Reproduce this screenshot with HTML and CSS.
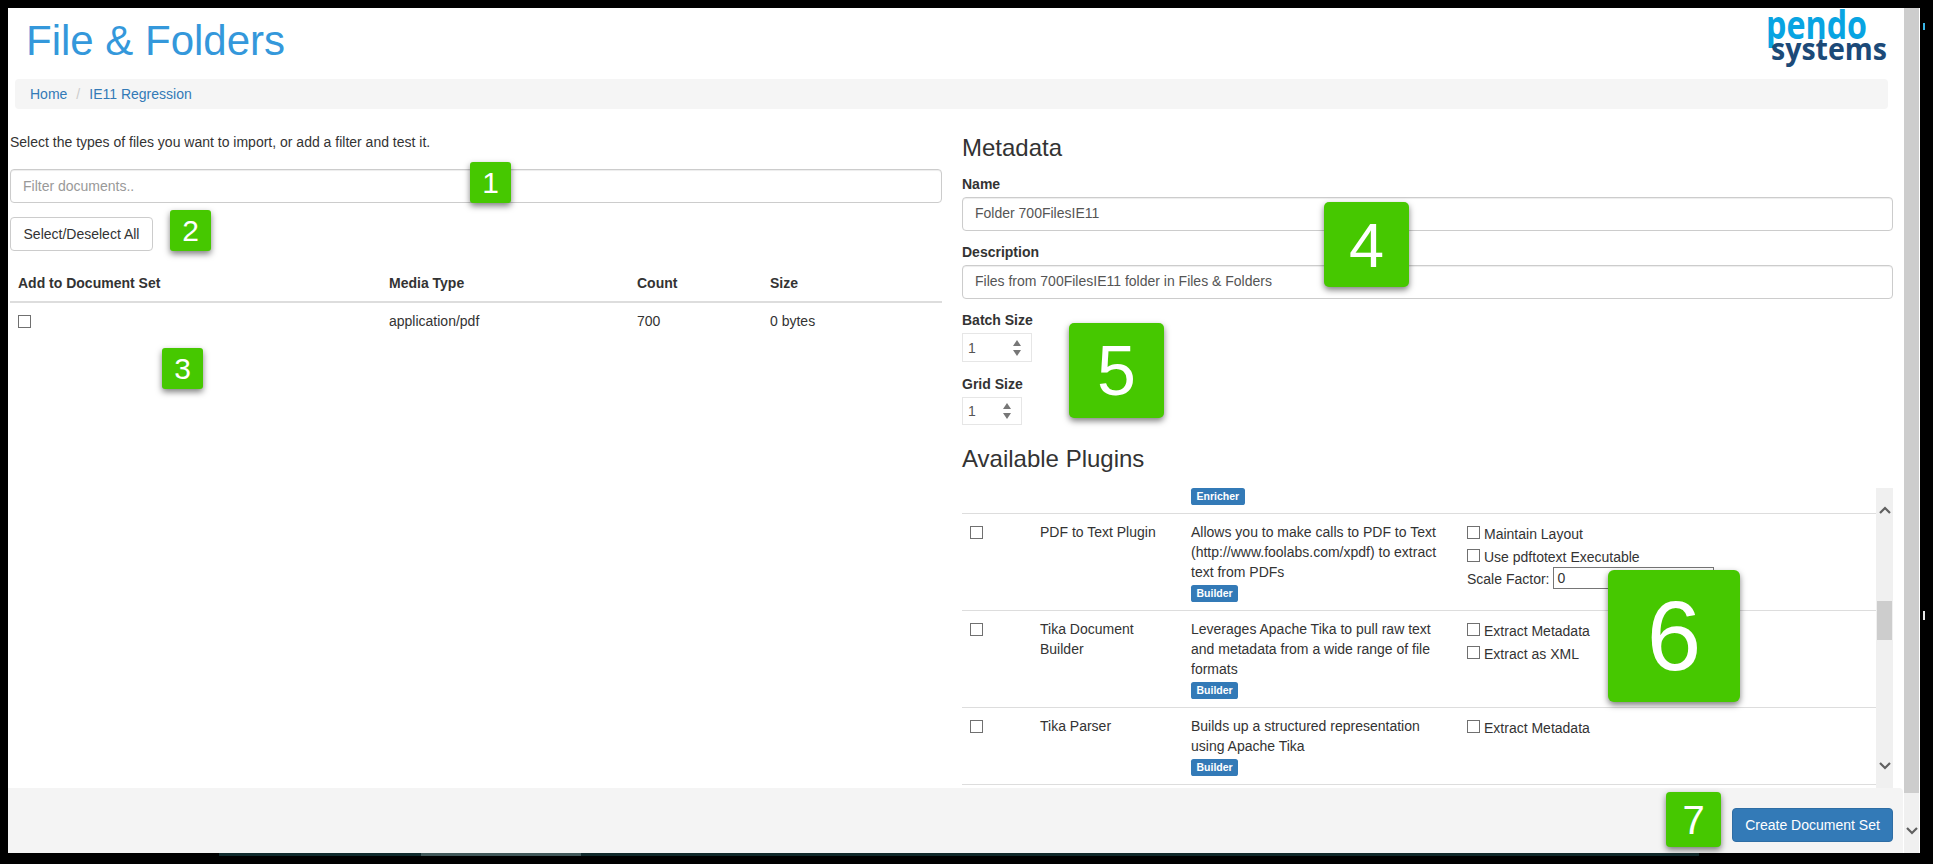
FILE: index.html
```html
<!DOCTYPE html>
<html lang="en">
<head>
<meta charset="utf-8">
<title>File &amp; Folders</title>
<link rel="stylesheet" href="styles.css">
</head>
<body>
<div class="window">
  <div class="page">
    <header class="header">
      <h1 class="title">File &amp; Folders</h1>
      <svg class="logo" width="124" height="62" viewBox="0 0 124 62" aria-label="pendo systems">
        <text class="logo-pendo" x="1" y="30" textLength="101" lengthAdjust="spacingAndGlyphs">pendo</text>
        <text class="logo-systems" x="6" y="51" textLength="116" lengthAdjust="spacingAndGlyphs">systems</text>
      </svg>
    </header>
    <nav class="crumbs"><a class="crumb" href="#">Home</a><span class="crumb-sep">/</span><a class="crumb" href="#">IE11 Regression</a></nav>
    <main class="main">
      <section class="col-left">
        <p class="intro">Select the types of files you want to import, or add a filter and test it.</p>
        <input class="control filter" type="text" placeholder="Filter documents..">
        <button class="btn select-all" type="button">Select/Deselect All</button>
        <table class="types">
          <thead>
            <tr><th class="t1">Add to Document Set</th><th class="t2">Media Type</th><th class="t3">Count</th><th class="t4">Size</th></tr>
          </thead>
          <tbody>
            <tr><td><input class="check" type="checkbox"></td><td>application/pdf</td><td>700</td><td>0 bytes</td></tr>
          </tbody>
        </table>
      </section>
      <section class="col-right">
        <h3 class="heading">Metadata</h3>
        <label class="field-label name-label">Name</label>
        <input class="control meta-input" type="text" value="Folder 700FilesIE11">
        <label class="field-label">Description</label>
        <input class="control meta-input" type="text" value="Files from 700FilesIE11 folder in Files &amp; Folders">
        <label class="field-label">Batch Size</label>
        <div class="num num-batch">
          <input class="num-input" type="text" value="1">
          <svg class="spin" width="8" height="16" viewBox="0 0 8 16"><path d="M4 0 8 6H0zM0 10H8L4 16z"/></svg>
        </div>
        <label class="field-label grid-label">Grid Size</label>
        <div class="num num-grid">
          <input class="num-input" type="text" value="1">
          <svg class="spin" width="8" height="16" viewBox="0 0 8 16"><path d="M4 0 8 6H0zM0 10H8L4 16z"/></svg>
        </div>
        <h3 class="heading plugins-heading">Available Plugins</h3>
        <div class="plugins">
          <div class="plugin-list">
            <table class="plugin-table">
              <tbody>
                <tr class="cut-row">
                  <td class="p1"></td><td class="p2"></td>
                  <td class="p3"><div class="line"><span class="tag">Enricher</span></div></td>
                  <td class="p4"></td>
                </tr>
                <tr>
                  <td><input class="check" type="checkbox"></td>
                  <td>PDF to Text Plugin</td>
                  <td>Allows you to make calls to PDF to Text (http://www.foolabs.com/xpdf) to extract text from PDFs<div class="line"><span class="tag">Builder</span></div></td>
                  <td>
                    <label class="opt"><input class="check opt-check" type="checkbox">Maintain Layout</label>
                    <label class="opt"><input class="check opt-check" type="checkbox">Use pdftotext Executable</label>
                    <label class="opt-text">Scale Factor:<input class="scale" type="text" value="0"></label>
                  </td>
                </tr>
                <tr>
                  <td><input class="check" type="checkbox"></td>
                  <td>Tika Document Builder</td>
                  <td>Leverages Apache Tika to pull raw text and metadata from a wide range of file formats<div class="line"><span class="tag">Builder</span></div></td>
                  <td>
                    <label class="opt"><input class="check opt-check" type="checkbox">Extract Metadata</label>
                    <label class="opt"><input class="check opt-check" type="checkbox">Extract as XML</label>
                  </td>
                </tr>
                <tr>
                  <td><input class="check" type="checkbox"></td>
                  <td>Tika Parser</td>
                  <td>Builds up a structured representation using Apache Tika<div class="line"><span class="tag">Builder</span></div></td>
                  <td>
                    <label class="opt"><input class="check opt-check" type="checkbox">Extract Metadata</label>
                  </td>
                </tr>
              </tbody>
            </table>
          </div>
          <div class="inner-track">
            <svg class="chev chev-up" width="12" height="8" viewBox="0 0 12 8"><path d="M1 7 6 2l5 5"/></svg>
            <div class="inner-thumb"></div>
            <svg class="chev chev-down" width="12" height="8" viewBox="0 0 12 8"><path d="M1 1l5 5 5-5"/></svg>
          </div>
        </div>
      </section>
    </main>
    <footer class="footer">
      <button class="btn btn-primary" type="button">Create Document Set</button>
    </footer>
  </div>
  <div class="outer-bar">
    <div class="outer-thumb"></div>
    <svg class="chev outer-chev" width="12" height="8" viewBox="0 0 12 8"><path d="M1 1l5 5 5-5"/></svg>
  </div>
  <div class="callout c1">1</div>
  <div class="callout c2">2</div>
  <div class="callout c3">3</div>
  <div class="callout c4">4</div>
  <div class="callout c5">5</div>
  <div class="callout c6">6</div>
  <div class="callout c7">7</div>
</div>
<div class="strip"></div>
<div class="blip blip-a"></div>
<div class="blip blip-b"></div>
</body>
</html>
```

FILE: styles.css
```css
* { box-sizing: border-box; }

html, body { height: 100%; }

body {
  margin: 0;
  padding: 8px 0 0 8px;
  background: #000;
  overflow: hidden;
  font-family: "Liberation Sans", Arial, sans-serif;
  font-size: 14px;
  line-height: 20px;
  color: #333;
}

.window {
  position: relative;
  display: flex;
  width: 1912px;
  height: 845px;
  background: #fff;
}

.page {
  display: flex;
  flex-direction: column;
  width: 1896px;
  min-width: 0;
}

/* header */
.header {
  display: flex;
  justify-content: space-between;
  align-items: flex-start;
  flex: none;
  height: 71px;
  padding: 0 15px 0 18px;
}

.title {
  margin: 8px 0 0;
  font-size: 42px;
  line-height: 50px;
  font-weight: 400;
  color: #3498db;
}

.logo { display: block; margin-top: 1px; }

.logo-pendo {
  font-family: "Open Sans", sans-serif;
  font-weight: 700;
  font-size: 40px;
  fill: #08a4e2;
}

.logo-systems {
  font-family: "Open Sans", sans-serif;
  font-weight: 700;
  font-size: 31px;
  fill: #1c4a78;
}

/* breadcrumb */
.crumbs {
  flex: none;
  height: 30px;
  margin: 0 16px 0 7px;
  padding: 5px 15px;
  border-radius: 4px;
  background: #f5f5f5;
}

.crumb { color: #337ab7; text-decoration: none; }

.crumb-sep { padding: 0 9px 0 9px; color: #ccc; }

/* columns */
.main {
  display: flex;
  flex: 1;
  min-height: 0;
  gap: 20px;
  padding: 0 11px 0 2px;
  overflow: hidden;
}

.col-left {
  display: flex;
  flex-direction: column;
  align-items: flex-start;
  width: 932px;
  padding-top: 23px;
}

.col-right {
  display: flex;
  flex-direction: column;
  align-items: flex-start;
  width: 931px;
  padding-top: 26px;
}

.intro { margin: 0 0 17px; }

.control {
  display: block;
  flex: none;
  width: 100%;
  height: 34px;
  padding: 6px 12px;
  border: 1px solid #ccc;
  border-radius: 4px;
  box-shadow: inset 0 1px 1px rgba(0, 0, 0, .075);
  background: #fff;
  font: inherit;
  color: #555;
}

.control::placeholder { color: #999; opacity: 1; }

.meta-input { padding-top: 5px; padding-bottom: 7px; }

.btn {
  height: 34px;
  padding: 6px 12px;
  border: 1px solid #ccc;
  border-radius: 4px;
  background: #fff;
  font: inherit;
  color: #333;
}

.select-all { flex: none; width: 143px; margin-top: 14px; padding: 6px 0; }

.btn-primary {
  width: 161px;
  padding: 6px 0;
  border-color: #2e6da4;
  background: #337ab7;
  color: #fff;
}

/* file type table */
.types {
  width: 100%;
  margin-top: 14px;
  border-collapse: collapse;
  table-layout: fixed;
}

.types th {
  padding: 8px;
  border-bottom: 2px solid #ddd;
  text-align: left;
  font-weight: 700;
}

.types td { padding: 8px; vertical-align: top; }

.t1 { width: 371px; }
.t2 { width: 248px; }
.t3 { width: 133px; }

.check {
  appearance: none;
  display: block;
  width: 13px;
  height: 13px;
  margin: 4px 0 0;
  border: 1px solid #707070;
  background: #fff;
}

/* metadata */
.heading {
  margin: 0;
  font-size: 24px;
  line-height: 26px;
  font-weight: 400;
  color: #333;
}

.field-label {
  display: block;
  flex: none;
  margin: 11px 0 3px;
  font-weight: 700;
}

.name-label { margin-top: 13px; }
.grid-label { margin-top: 12px; }

.num {
  display: flex;
  flex: none;
  align-items: center;
  justify-content: space-between;
  height: 29px;
  padding: 0 10px 0 5px;
  border: 1px solid #e6e6e6;
  background: #fff;
}

.num-batch { width: 70px; }
.num-grid { width: 60px; height: 28px; }

.num-input {
  width: 30px;
  padding: 0;
  border: 0;
  outline: 0;
  font: inherit;
  color: #555;
  background: transparent;
}

.spin { display: block; fill: #777; }

.plugins-heading { margin-top: 21px; }

/* plugins */
.plugins {
  display: flex;
  flex: 1;
  min-height: 0;
  align-self: stretch;
  margin: 16px 0 0;
  overflow: hidden;
}

.plugin-list { width: 914px; overflow: hidden; }

.plugin-table {
  width: 914px;
  margin-top: -3px;
  border-collapse: collapse;
  table-layout: fixed;
}

.plugin-table td {
  padding: 8px;
  border-bottom: 1px solid #ddd;
  vertical-align: top;
}

.plugin-table .cut-row td { padding-top: 0; }

.p1 { width: 70px; }
.p2 { width: 151px; }
.p3 { width: 276px; }

.line { height: 20px; }

.tag {
  display: inline;
  padding: 2.1px 5.5px 3.15px;
  border-radius: 2.6px;
  background: #337ab7;
  font-size: 10.5px;
  font-weight: 700;
  line-height: 1;
  color: #fff;
}

.opt {
  display: flex;
  height: 23px;
  align-items: center;
  gap: 4px;
}

.opt-check { align-self: flex-start; margin-top: 4px; flex: none; }

.opt-text {
  display: flex;
  height: 22px;
  align-items: center;
  gap: 4px;
}

.scale {
  width: 161px;
  height: 22px;
  margin-top: -2px;
  padding: 0 3px;
  border: 1px solid #767676;
  background: #fff;
  font: inherit;
  color: #333;
}

/* scrollbars */
.inner-track {
  display: flex;
  flex-direction: column;
  align-items: center;
  width: 17px;
  background: #f0f0f0;
}

.chev { display: block; flex: none; fill: none; stroke: #606060; stroke-width: 2.2; }

.chev-up { margin-top: 18px; }

.inner-thumb {
  flex: none;
  width: 15px;
  height: 39px;
  margin-top: 87px;
  background: #cdcdcd;
}

.chev-down { margin-top: 122px; }

.outer-bar {
  display: flex;
  flex-direction: column;
  align-items: center;
  width: 16px;
  border-right: 1px solid #fff;
  background: #f0f0f0;
}

.outer-thumb { flex: none; width: 100%; height: 785px; background: #cdcdcd; }

.outer-chev { margin-top: 34px; }

/* footer */
.footer {
  display: flex;
  flex: none;
  justify-content: flex-end;
  align-items: flex-start;
  height: 65px;
  margin-right: 1px;
  padding: 20px 10px 0 0;
  border-top-right-radius: 4px;
  background: #f4f4f4;
}

/* numbered callouts laid over the screenshot */
.callout {
  position: absolute;
  display: flex;
  align-items: center;
  justify-content: center;
  border-radius: 3px;
  background: #46c800;
  box-shadow: 0 3px 6px rgba(0, 0, 0, .5);
  color: #fff;
}

.c1 { left: 462px; top: 154px; width: 41px; height: 41px; font-size: 30px; }
.c2 { left: 162px; top: 202px; width: 41px; height: 41px; font-size: 30px; }
.c3 { left: 154px; top: 340px; width: 41px; height: 41px; font-size: 30px; }
.c4 { left: 1316px; top: 194px; width: 85px; height: 85px; font-size: 63px; border-radius: 5px; }
.c5 { left: 1061px; top: 315px; width: 95px; height: 95px; font-size: 70px; border-radius: 5px; }
.c6 { left: 1600px; top: 562px; width: 132px; height: 132px; font-size: 98px; border-radius: 6px; }
.c7 { left: 1658px; top: 784px; width: 55px; height: 55px; font-size: 40px; border-radius: 4px; }

/* stray edges of what is behind the window */
.strip {
  width: 1480px;
  height: 3px;
  margin-left: 211px;
  background: linear-gradient(to right, #0f2b2d 0, #0f2b2d 202px, #41595a 202px, #41595a 362px, #10292b 362px, #10292b 100%);
}

.blip { position: absolute; width: 2px; }
.blip-a { left: 1923px; top: 23px; height: 7px; background: #39b6e8; }
.blip-b { left: 1923px; top: 611px; height: 9px; background: #e8e8e8; }
```
